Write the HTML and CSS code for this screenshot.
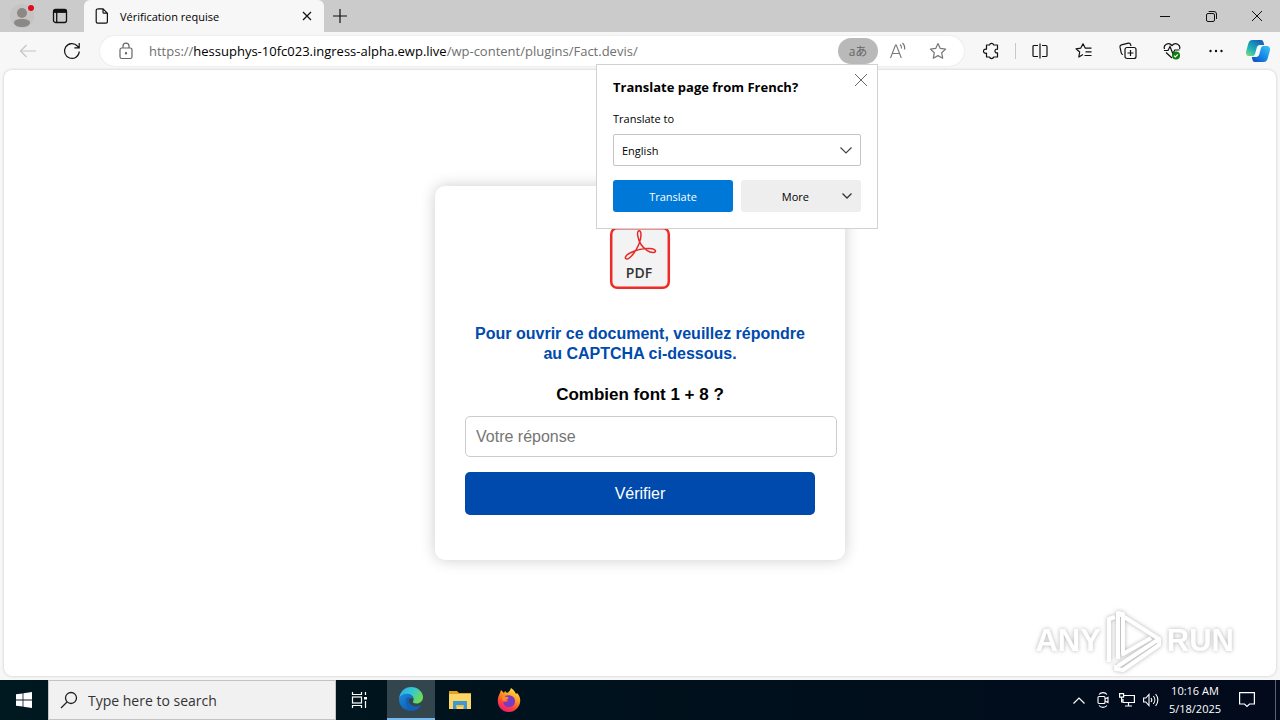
FILE: index.html
```
<!DOCTYPE html>
<html lang="fr">
<head>
    <meta charset="UTF-8">
    <meta name="viewport" content="width=device-width, initial-scale=1.0">
    <title>Vérification requise</title>

    <link rel="stylesheet" href="styles.css">
</head>
<body>
    <!-- Tab strip -->
    <header class="tabStrip">
        <button class="profile" aria-label="Profile">
            <svg width="24" height="24" viewBox="0 0 24 24">
                <circle cx="12" cy="12" r="12" fill="#c6c4c3"/>
                <circle cx="12" cy="9" r="5" fill="#8b8886"/>
                <path d="M4 19c0-3 3-4 8-4s8 1 8 4c-1 3-4 4-8 4s-7-1-8-4z" fill="#8b8886"/>
                <circle cx="21" cy="4" r="3" fill="#e00b1c"/>
            </svg>
        </button>
        <button class="tabActions" aria-label="Tab actions">
            <svg width="16" height="16" viewBox="0 0 16 16" fill="none" stroke="#111" stroke-width="1.3">
                <rect x="1.5" y="1.5" width="13" height="13" rx="2"/>
                <path d="M1.5 3.2h13" stroke-width="3.4"/>
                <path d="M4.7 4v10"/>
            </svg>
        </button>
        <div class="tab">
            <svg width="14" height="16" viewBox="0 0 14 16" fill="none" stroke="#111" stroke-width="1.2">
                <path d="M2.5.8H8l4.4 4.4v8.6a1.4 1.4 0 0 1-1.4 1.4H2.6a1.4 1.4 0 0 1-1.4-1.4V2.2A1.4 1.4 0 0 1 2.6.8zM8 .8v3.4a1 1 0 0 0 1 1h3.4"/>
            </svg>
            <span class="tabTitle">Vérification requise</span>
            <button class="tabClose" aria-label="Close tab">
                <svg width="10" height="10" viewBox="0 0 10 10" stroke="#111" stroke-width="1.2"><path d="M1 1l8 8M9 1L1 9"/></svg>
            </button>
        </div>
        <button class="newTab" aria-label="New tab">
            <svg width="14" height="14" viewBox="0 0 14 14" stroke="#111" stroke-width="1.2"><path d="M7 0v14M0 7h14"/></svg>
        </button>
        <div class="windowButtons">
            <button aria-label="Minimize"><svg width="10" height="10" viewBox="0 0 10 10" stroke="#111"><path d="M0 5.5h10"/></svg></button>
            <button aria-label="Restore">
                <svg width="11" height="11" viewBox="0 0 11 11" fill="none" stroke="#111">
                    <rect x=".5" y="2.5" width="8" height="8" rx="1.5"/>
                    <path d="M2.7.5h5.3a2.5 2.5 0 0 1 2.5 2.5v5"/>
                </svg>
            </button>
            <button aria-label="Close"><svg width="10" height="10" viewBox="0 0 10 10" stroke="#111"><path d="M0 0l10 10M10 0L0 10"/></svg></button>
        </div>
    </header>

    <!-- Toolbar with the address bar -->
    <nav class="toolbar">
        <button aria-label="Back">
            <svg width="18" height="14" viewBox="0 0 18 14" fill="none" stroke="#c4c4c4" stroke-width="1.2"><path d="M17 7H1.5M7.5 1l-6 6 6 6"/></svg>
        </button>
        <button aria-label="Refresh">
            <svg width="18" height="18" viewBox="0 0 18 18" fill="none" stroke="#111" stroke-width="1.2"><path d="M16.3 9.5A7.4 7.4 0 1 1 14.4 4L16 5.6M16.2 1v4.8h-4.8"/></svg>
        </button>
        <div class="addressBar">
            <svg width="20" height="18" viewBox="0 0 20 18" fill="none" stroke="#666" stroke-width="1.2">
                <rect x="4" y="6" width="12" height="10.5" rx="1.8"/>
                <path d="M7 6V4.2a3 3 0 0 1 6 0V6"/>
                <circle cx="10" cy="11.2" r=".6" fill="#666"/>
            </svg>
            <div class="url" role="textbox" contenteditable="true" spellcheck="false" aria-label="Address">https://<strong>hessuphys-10fc023.ingress-alpha.ewp.live</strong>/wp-content/plugins/Fact.devis/</div>
            <div class="translate">
                <button class="translateToggle" aria-label="Translate">aあ</button>

                <!-- Translate pop-up -->
                <section class="translatePopup" lang="en">
                    <button class="popupClose" aria-label="Close">
                        <svg width="12" height="12" viewBox="0 0 12 12" stroke="#666"><path d="M0 0l12 12M12 0L0 12"/></svg>
                    </button>
                    <h2>Translate page from French?</h2>
                    <label for="language">Translate to</label>
                    <div class="selectBox">
                        <select id="language">
                            <option>English</option>
                        </select>
                        <svg width="12" height="7" viewBox="0 0 12 7" fill="none" stroke="#444" stroke-width="1.2"><path d="M.5.5L6 6 11.5.5"/></svg>
                    </div>
                    <div class="popupButtons">
                        <button class="primary">Translate</button>
                        <button class="more">More
                            <svg width="10" height="6" viewBox="0 0 10 6" fill="none" stroke="#333" stroke-width="1.3"><path d="M.5.5L5 5 9.5.5"/></svg>
                        </button>
                    </div>
                </section>
            </div>
            <button class="addressButton" aria-label="Read aloud">
                <svg width="18" height="18" viewBox="0 0 18 18" fill="none" stroke="#777" stroke-width="1.1">
                    <path d="M1.5 16L6.5 3h.8l5 13M3.3 11.5h7.2M11 2.5c1.3 1.2 1.6 2.5 1.5 4M13.5 1c2 1.8 2.5 4 2.2 6.5"/>
                </svg>
            </button>
            <button class="addressButton" aria-label="Add to favorites">
                <svg width="18" height="18" viewBox="0 0 18 18" fill="none" stroke="#777" stroke-width="1.2" stroke-linejoin="round">
                    <path d="M9 1.5l2.3 4.9 5.3.7-3.9 3.7 1 5.4L9 13.6l-4.700 2.600 1-5.400L1.400 7.100l5.300-.7z"/>
                </svg>
            </button>
        </div>
        <button class="extensions" aria-label="Extensions">
            <svg width="18" height="18" viewBox="0 0 18 18" fill="none" stroke="#111" stroke-width="1.2" stroke-linejoin="round">
                <path d="M5 3h2.500a2.200 2.200 0 0 1 4.200 0H15.500v4.200c-3.400-.6-3.400 4.300 0 3.600V15h-3.800a2.200 2.200 0 0 1-4.200 0H4.500v-3.800c-4 .8-4-4.800 0-4.100V3z"/>
            </svg>
        </button>
        <span class="separator"></span>
        <button aria-label="Split screen">
            <svg width="16" height="16" viewBox="0 0 16 16" fill="none" stroke="#111" stroke-width="1.2"><path d="M6 2.500H2a1 1 0 0 0-1 1v9a1 1 0 0 0 1 1h4M10 2.500h4a1 1 0 0 1 1 1v9a1 1 0 0 1-1 1h-4M8 .5v15"/></svg>
        </button>
        <button aria-label="Favorites">
            <svg width="18" height="16" viewBox="0 0 18 16" fill="none" stroke="#111" stroke-width="1.2" stroke-linejoin="round">
                <path d="M8 11.500L3.800 14l.9-5L1 5.800l4.800-.7L8 .8l2.200 4.300h6.300M10.500 8.800h6M9.500 12.500h7"/>
            </svg>
        </button>
        <button aria-label="Collections">
            <svg width="18" height="18" viewBox="0 0 18 18" fill="none" stroke="#111" stroke-width="1.2">
                <path d="M4 12.500c-1 0-1.500-.5-1.700-1.500L1 5.200C.8 4 1.300 3.200 2.400 2.900l7-1.700c1.300-.2 2 .3 2.300 1.800l.3 1"/>
                <rect x="6" y="5.500" width="11" height="11" rx="2"/>
                <path d="M11.500 8v6M8.500 11h6"/>
            </svg>
        </button>
        <button aria-label="Browser essentials">
            <svg width="18" height="18" viewBox="0 0 18 18" fill="none" stroke="#111" stroke-width="1.2">
                <path d="M1.500 7C0 3 5.500-.5 9 3.500 12.500-.5 18 3 16.500 7M3 10.500l6 5.500M1 8.500h4l2-4 2.800 7 2-3.500h4.700"/>
                <circle cx="13" cy="13.500" r="4" fill="#0f7b0f" stroke="none"/>
                <path d="M11 13.700l1.300 1.300 2.600-2.600" stroke="#fff"/>
            </svg>
        </button>
        <button aria-label="Settings and more">
            <svg width="14" height="4" viewBox="0 0 14 4" fill="#111"><circle cx="1.5" cy="2" r="1.2"/><circle cx="7" cy="2" r="1.2"/><circle cx="12.5" cy="2" r="1.2"/></svg>
        </button>
        <button class="copilot" aria-label="Copilot">
            <svg width="24" height="22" viewBox="0 0 24 22">
                <defs>
                    <linearGradient id="copilotLeft" x1="0" y1="1" x2=".7" y2="0"><stop offset="0" stop-color="#8be06a"/><stop offset=".4" stop-color="#21b6b9"/><stop offset="1" stop-color="#1464b8"/></linearGradient>
                    <linearGradient id="copilotRight" x1="0" y1="1" x2="1" y2="0"><stop offset="0" stop-color="#0f48c0"/><stop offset=".5" stop-color="#168be8"/><stop offset="1" stop-color="#3dc6f3"/></linearGradient>
                </defs>
                <path d="M6.500 0H15c2 0 2.700 2 3.200 5H14c-2 0-3 1.500-3.500 3.500L9 14c-.6 1.500-1.500 2-3 2H3c-2.500 0-3.500-2-2.800-5l2-7C3 1.300 4 0 6.500 0z" fill="url(#copilotLeft)"/>
                <path d="M17.500 22H9c-2 0-2.700-2-3.200-5H10c2 0 3-1.500 3.500-3.500L15 8c.6-1.500 1.500-2 3-2h3c2.500 0 3.500 2 2.800 5l-2 7c-.8 2.700-1.800 4-4.300 4z" fill="url(#copilotRight)"/>
            </svg>
        </button>
    </nav>

    <!-- Page content -->
    <main class="page">
        <form class="card">
            <svg class="logo" width="80" height="80" viewBox="0 0 80 80" role="img" aria-label="PDF">
                <rect x="11.2" y="12.2" width="57.6" height="59.6" rx="6" fill="#f3f3f3" stroke="#ee2b27" stroke-width="2.5"/>
                <path d="M38.500 15c3.500-1.500 3 7 .5 13-2.500 6-8 14.500-12 15-3 0-2-3.500 3-6 6-3 15-4.800 20-4.500 6 .4 7 3.500 3.500 4-4 .5-9.500-3.500-12.500-8-3-4.500-4.500-12.500-2.500-13.500z" fill="none" stroke="#e52a2a" stroke-width="1.5"/>
                <text x="39" y="62" text-anchor="middle">PDF</text>
            </svg>
            <h1>Pour ouvrir ce document, veuillez répondre au CAPTCHA ci-dessous.</h1>
            <label for="answer">Combien font 1 + 8 ?</label>
            <input id="answer" type="text" placeholder="Votre réponse">
            <button type="button">Vérifier</button>
        </form>
    </main>

    <!-- Watermark over the desktop -->
    <div class="watermark">
        <span>ANY</span>
        <svg width="60" height="64" viewBox="0 0 60 64" fill="none" stroke="#fff" stroke-width="4" stroke-linejoin="round">
            <path d="M5 53V10l6-2"/>
            <path d="M14 50V4l41 26-41 27M14 4l5 1v40l28-16M12 56v4l7 1 36-25v-6"/>
        </svg>
        <span>RUN</span>
    </div>

    <!-- Windows taskbar -->
    <footer class="taskbar" lang="en">
        <button class="start" aria-label="Start">
            <svg width="16" height="16" viewBox="0 0 16 16" fill="#fff"><path d="M0 2.300l6.600-.9v6.200H0zM7.400 1.300L16 0v7.600H7.400zM0 8.400h6.600v6.200L0 13.700zM7.400 8.400H16V16l-8.600-1.300z"/></svg>
        </button>
        <div class="search">
            <svg width="18" height="18" viewBox="0 0 18 18" fill="none" stroke="#222" stroke-width="1.3"><circle cx="11" cy="7" r="5.5"/><path d="M7 11l-6 6"/></svg>
            <input type="text" placeholder="Type here to search" aria-label="Search">
        </div>
        <div class="apps">
            <button aria-label="Task View">
                <svg width="18" height="16" viewBox="0 0 18 16" fill="none" stroke="#fff" stroke-width="1.2"><path d="M1.500 0v2.500h9V0M1.500 16v-2.500h9V16M14.500 0v3M14.500 9v7"/><rect x="1.5" y="5" width="9" height="6"/><path d="M13 5h3v2.500h-3z" fill="#fff" stroke="none"/></svg>
            </button>
            <button class="running" aria-label="Microsoft Edge">
                <svg width="24" height="24" viewBox="0 0 24 24">
                    <defs>
                        <linearGradient id="edgeTop" x1="0" y1="0" x2="1" y2=".5"><stop offset="0" stop-color="#29a8e8"/><stop offset=".55" stop-color="#35c8d2"/><stop offset="1" stop-color="#6ddb55"/></linearGradient>
                        <linearGradient id="edgeSide" x1="0" y1="0" x2="1" y2="1"><stop offset="0" stop-color="#1b8be0"/><stop offset="1" stop-color="#0c4da0"/></linearGradient>
                    </defs>
                    <path d="M0 12C1 4 6 0 12 0c7 0 12 5 12 10 0 4-3 6.500-6.500 6.500-2.500 0-4-1-3.500-2 1.500-2.500.5-5.500-3-7C7 6 1.500 8 0 12z" fill="url(#edgeTop)"/>
                    <path d="M0 12c1-4 6-6 10-5 3 .7 4.500 3 4 5-1-1-3-1.500-4 0-1.500 3 1.500 7 6 7.500 2.500.3 4.500-.5 6-1.500C20 22 16.500 24 12 24 5 24 0 19 0 12z" fill="url(#edgeSide)"/>
                    <path d="M7 12c-1 5 2 10 7 11.800 3.500-.8 6.500-3 8-5.800-6 3.500-12.500 0-12.500-4 0-1.500 1-2.700 2-3C9.500 9.500 7.500 10 7 12z" fill="#1261b5"/>
                </svg>
            </button>
            <button aria-label="File Explorer">
                <svg width="22" height="20" viewBox="0 0 22 20">
                    <path d="M0 1h8l2 2h12v4H0z" fill="#e5a01f"/>
                    <path d="M0 4h22v15H0z" fill="#fbd667"/>
                    <path d="M4 11h14v8h-3.500v-4h-7v4H4z" fill="#3e97d3"/>
                    <path d="M7.500 15h7v2h-7z" fill="#f4be3e"/>
                </svg>
            </button>
            <button aria-label="Firefox">
                <svg width="24" height="24" viewBox="0 0 24 24">
                    <defs><linearGradient id="fox" x1=".8" y1="0" x2=".3" y2="1"><stop offset="0" stop-color="#fff04a"/><stop offset=".4" stop-color="#ff9a20"/><stop offset=".7" stop-color="#ff4538"/><stop offset="1" stop-color="#ed1a78"/></linearGradient></defs>
                    <path d="M3 5l1-3 3 3 1-2 2 2c2-1 3-2 4-5 3 2 4 4 5 6l1-1c2 2 3.500 5 3.200 8C23 19 18 24 12 24 5 24 .8 19 .8 13 .8 9 2 7 3 5z" fill="url(#fox)"/>
                    <path d="M8 8c4-2 10 0 10 5 0 4-3 6-6 6-4 0-6-3-5.500-6 1 1 3 1.500 4.500 0-2-1-3-3-3-5z" fill="#793ac8"/>
                    <path d="M5 8c2 0 3 1 5 1s2 2 0 2.500-2 2-3 2-2-2-2-5.500z" fill="#ff8a22"/>
                </svg>
            </button>
        </div>
        <div class="tray">
            <button aria-label="Show hidden icons"><svg width="12" height="7" viewBox="0 0 12 7" fill="none" stroke="#fff" stroke-width="1.2"><path d="M.5 6.500L6 1l5.500 5.500"/></svg></button>
            <button aria-label="Meet Now"><svg width="12" height="16" viewBox="0 0 12 16" fill="none" stroke="#fff" stroke-width="1.1"><rect x="1" y="4.5" width="7" height="7" rx="1"/><path d="M8 7l3-1.500v5L8 9M2 2.500C4 0 8 0 10 2.500M2 13.500c2 2.500 6 2.500 8 0"/></svg></button>
            <button aria-label="Network"><svg width="16" height="14" viewBox="0 0 16 14" fill="none" stroke="#fff" stroke-width="1.2"><path d="M5 2.500h10.400v7H4V6M.6.600h4v3.500h-4zM2.600 4v5.500M9.500 9.500v3.500M6 13h7"/></svg></button>
            <button aria-label="Volume"><svg width="16" height="14" viewBox="0 0 16 14" fill="none" stroke="#fff" stroke-width="1.1"><path d="M.6 5h2.200L6 1.500v11L2.800 9H.6zM8 5c1 1.200 1 2.800 0 4M10.300 3c2 2.300 2 5.700 0 8M12.600 1c3 3.500 3 8.500 0 12"/></svg></button>
            <button class="clock"><time>10:16 AM</time><time>5/18/2025</time></button>
            <button class="notifications" aria-label="Notifications"><svg width="16" height="16" viewBox="0 0 16 16" fill="none" stroke="#fff" stroke-width="1.2"><path d="M.6.600h14.800v11.400h-4.900L8 14.500 5.500 12H.6z"/></svg></button>
            <span class="showDesktop"></span>
        </div>
    </footer>
</body>
</html>
```
FILE: styles.css
```
/* General body styling */
* {
    box-sizing: border-box;
}

body {
    display: flex;
    flex-direction: column;
    min-height: 100vh;
    margin: 0;
    background-color: #f7f7f7;
    color: #000;
    font-family: "Open Sans", "Noto Sans CJK JP", sans-serif;
    font-size: 11px;
}

button {
    display: flex;
    align-items: center;
    justify-content: center;
    padding: 0;
    border: 0;
    background: none;
    color: inherit;
    font: inherit;
}

svg {
    flex: none;
}

/* Tab strip */
.tabStrip {
    display: flex;
    height: 32px;
    background-color: #cbcbcb;
}

.profile {
    width: 44px;
}

.tabActions {
    width: 32px;
    margin-right: 8px;
}

.tab {
    display: flex;
    align-items: center;
    gap: 11px;
    width: 240px;
    padding: 0 12px 0 11px;
    border-radius: 6px 6px 0 0;
    background-color: #f7f7f7;
}

.tabTitle {
    flex: 1;
}

.newTab {
    width: 32px;
}

.windowButtons {
    display: flex;
    margin-left: auto;
}

.windowButtons button {
    width: 46px;
}

/* Toolbar */
.toolbar {
    display: flex;
    align-items: center;
    height: 38px;
    padding: 0 2px 0 6px;
}

.toolbar > button {
    width: 44px;
    height: 32px;
}

.toolbar > .copilot {
    width: 40px;
}

.toolbar > .extensions {
    margin-left: 5px;
}

.separator {
    width: 1px;
    height: 16px;
    margin: 0 2px;
    background-color: #c8c8c8;
}

.addressBar {
    display: flex;
    flex: 1;
    align-items: center;
    height: 30px;
    margin-left: 6px;
    padding: 0 6px 0 16px;
    border-radius: 15px;
    background-color: #fff;
    box-shadow: 0 0 2px rgba(0, 0, 0, 0.12);
}

.url {
    flex: 1;
    margin-left: 13px;
    color: #707070;
    font-size: 13px;
    white-space: nowrap;
    outline: none;
}

.url strong {
    color: #000;
    font-weight: normal;
}

.addressButton {
    width: 40px;
    height: 28px;
}

.translate {
    position: relative;
}

.translateToggle {
    width: 40px;
    height: 26px;
    border-radius: 13px;
    background-color: #b9b9b9;
    color: #666;
    font-size: 12px;
}

/* Translate pop-up, hangs under its button */
.translatePopup {
    position: absolute;
    top: 100%;
    right: 0;
    z-index: 2;
    width: 282px;
    padding: 13px 16px 16px;
    border: 1px solid #d2d2d2;
    background-color: #fff;
}

.translatePopup h2 {
    margin: 0 0 14px;
    font-size: 13px;
    line-height: 18px;
}

.translatePopup label {
    display: block;
    margin-bottom: 6px;
    line-height: 18px;
}

.popupClose {
    position: absolute;
    top: 4px;
    right: 5px;
    width: 22px;
    height: 22px;
}

.selectBox {
    display: flex;
    align-items: center;
    height: 32px;
    padding: 0 8px;
    border: 1px solid #c4c4c4;
    border-radius: 2px;
}

.selectBox select {
    flex: 1;
    padding: 0;
    border: 0;
    background: none;
    color: #000;
    font: inherit;
    appearance: none;
}

.popupButtons {
    display: grid;
    grid-template-columns: 1fr 1fr;
    gap: 8px;
    margin-top: 14px;
}

.popupButtons button {
    height: 32px;
    border-radius: 3px;
}

.popupButtons .primary {
    background-color: #0078d7;
    color: #fff;
}

.popupButtons .more {
    gap: 33px;
    justify-content: flex-end;
    padding-right: 9px;
    background-color: #eee;
}

/* Page content */
.page {
    display: flex;
    flex: 1;
    align-items: center;
    justify-content: center;
    margin: 0 4px 4px;
    border-radius: 8px;
    background-color: #fff;
    box-shadow: 0 0 3px rgba(0, 0, 0, 0.2);
    font-family: "Liberation Sans", Arial, sans-serif;
    font-size: 16px;
}

.card {
    width: 410px;
    padding: 30px 30px 45px;
    border-radius: 10px;
    box-shadow: 0 0 15px rgba(0, 0, 0, 0.2);
    text-align: center;
}

.logo {
    display: block;
    margin: 0 auto 28px;
}

.logo text {
    fill: #333;
    font-family: "Open Sans", sans-serif;
    font-size: 14px;
    font-weight: 600;
}

.card h1 {
    margin: 0 0 21px;
    color: #004aad;
    font-size: 16px;
    line-height: 20px;
}

.card label {
    display: block;
    margin-bottom: 11px;
    font-size: 17px;
    font-weight: bold;
    line-height: 20px;
}

/* The padding comes on top of the full width */
.card input {
    display: block;
    box-sizing: content-box;
    width: 100%;
    height: 19px;
    margin-bottom: 15px;
    padding: 10px;
    border: 1px solid #ccc;
    border-radius: 5px;
    font: inherit;
}

.card input::placeholder {
    color: #757575;
}

.card button {
    width: 100%;
    height: 43px;
    border-radius: 5px;
    background-color: #004aad;
    color: #fff;
}

/* Watermark */
.watermark {
    position: fixed;
    right: 46px;
    bottom: 47px;
    display: flex;
    align-items: center;
    gap: 3px;
    color: #fff;
    font-family: "Liberation Sans", Arial, sans-serif;
    font-size: 31px;
    font-weight: bold;
    filter: drop-shadow(0 0 2px rgba(0, 0, 0, 0.3));
    pointer-events: none;
}

/* Taskbar */
.taskbar {
    display: flex;
    height: 40px;
    background: linear-gradient(90deg, #001820, #00101c 60%, #020a1c);
    color: #fff;
}

.taskbar button {
    width: 48px;
}

.search {
    display: flex;
    align-items: center;
    gap: 10px;
    width: 288px;
    padding: 0 11px;
    border: 1px solid #c4c4c4;
    background-color: #f1f1f1;
}

.search input {
    flex: 1;
    min-width: 0;
    padding: 0;
    border: 0;
    background: none;
    font: inherit;
    font-size: 14px;
}

.search input::placeholder {
    color: #333;
}

.apps {
    display: flex;
    gap: 1px;
}

.apps .running {
    margin-left: 2px;
    border-bottom: 2px solid #76b9ed;
    background-color: #33464e;
}

.tray {
    display: flex;
    margin-left: auto;
}

.tray button {
    width: 24px;
}

.tray .clock {
    flex-direction: column;
    width: 64px;
    line-height: 18px;
}

.tray .notifications {
    width: 40px;
    margin-right: 8px;
}

.showDesktop {
    width: 5px;
    border-left: 1px solid #5a6470;
}
```
